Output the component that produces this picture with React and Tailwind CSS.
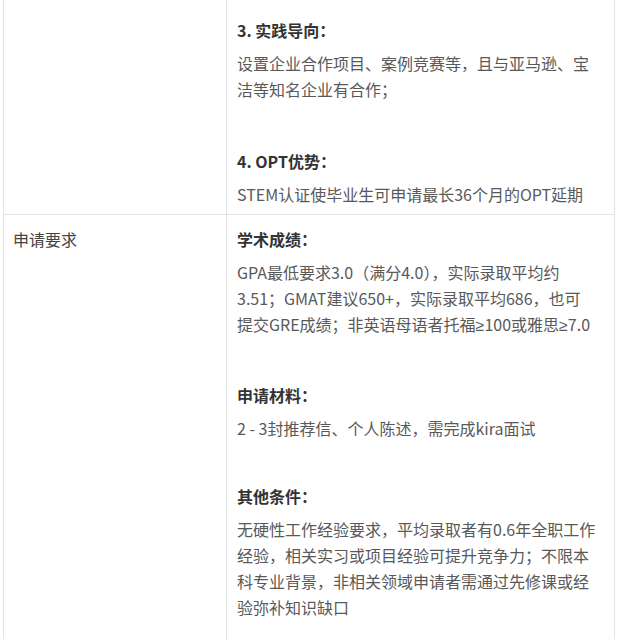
const FONT = { fontFamily: '"Noto Sans CJK SC", "Microsoft YaHei", sans-serif' }

function Block({ title, children, gap = 'mb-[46px]' }) {
  return (
    <div className={gap}>
      <p className="mb-[7px] text-[16px] leading-[26px] font-bold text-[#333]">{title}</p>
      <p className="text-[16px] leading-[26px] text-[#595959]">{children}</p>
    </div>
  )
}

// ≥ 用窄字形
const Ge = () => <span className="font-['Liberation_Sans',sans-serif]">≥</span>

export default function App() {
  return (
    <div className="bg-white min-h-screen pl-[3px]" style={FONT}>
      <div className="w-[612px] border-x border-[#e3e3e3]">
        {/* 第一行：延续自上方 */}
        <div className="grid grid-cols-[223px_1fr]">
          <div className="border-r border-[#e3e3e3]" />
          <div className="pl-[10px] pr-[8px] pt-[17px] pb-[7px]">
            <Block title="3. 实践导向：">
              设置企业合作项目、案例竞赛等，且与亚马逊、宝<br />洁等知名企业有合作；
            </Block>
            <Block title="4. OPT优势：" gap="">
              STEM认证使毕业生可申请最长36个月的OPT延期
            </Block>
          </div>
        </div>

        {/* 申请要求 */}
        <div className="grid grid-cols-[223px_1fr] border-t border-[#e3e3e3]">
          <div className="border-r border-[#e3e3e3] pl-[9px] pt-[11px]">
            <p className="text-[16px] leading-[26px] text-[#444]">申请要求</p>
          </div>
          <div className="pl-[10px] pr-[8px] pt-[11px] pb-[20px]">
            <Block title="学术成绩：" gap="mb-[43px]">
              GPA最低要求3.0（满分4.0），实际录取平均约<br />
              3.51；GMAT建议650+，实际录取平均686，也可<br />
              提交GRE成绩；非英语母语者托福<Ge />100或雅思<Ge />7.0
            </Block>
            <Block title="申请材料：" gap="mb-[42px]">
              2 - 3封推荐信、个人陈述，需完成kira面试
            </Block>
            <Block title="其他条件：" gap="">
              无硬性工作经验要求，平均录取者有0.6年全职工作<br />
              经验，相关实习或项目经验可提升竞争力；不限本<br />
              科专业背景，非相关领域申请者需通过先修课或经<br />
              验弥补知识缺口
            </Block>
          </div>
        </div>
      </div>
    </div>
  )
}
